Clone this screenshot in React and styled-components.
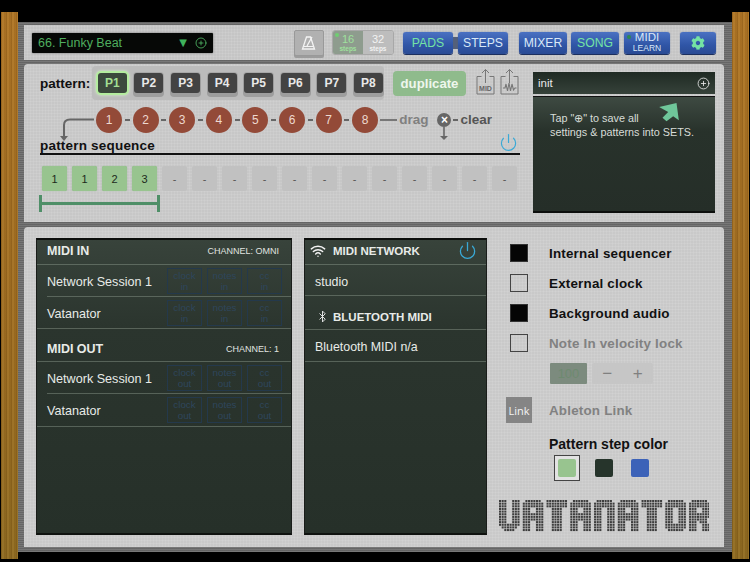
import React from "react"
import styled, { createGlobalStyle } from "styled-components"
import { Bluetooth, CirclePlus, Power, Wifi } from "lucide-react"
import { FaCog } from "react-icons/fa"

const GlobalStyle = createGlobalStyle`
    html, body { margin: 0; padding: 0; background: #000; }
    * { box-sizing: border-box; }
    body { font-family: "Liberation Sans", Arial, sans-serif; }
`;

const linen = `
    repeating-linear-gradient(0deg, rgba(255,255,255,.05) 0 1px, rgba(0,0,0,.012) 1px 3px),
    repeating-linear-gradient(90deg, rgba(255,255,255,.05) 0 1px, rgba(0,0,0,.012) 1px 3px)`;

const LOGO = {
    V: ["###..###","###..###","###..###","###..###","###..###","###..###","###..###","###..###","###..###","########",".######.","..####.."],
    A: [".######.","########","########","###..###","###..###","########","########","########","###..###","###..###","###..###","###..###"],
    T: ["########","########","########","..####..","..####..","..####..","..####..","..####..","..####..","..####..","..####..","..####.."],
    N: [".######.","########","########","###..###","###..###","###..###","###..###","###..###","###..###","###..###","###..###","###..###"],
    O: [".######.","########","########","###..###","###..###","###..###","###..###","###..###","###..###","########","########",".######."],
    R: [".######.","########","########","###..###","###..###","########","########","#######.","###.###.","###..###","###..###","###..###"],
};

function Logo(){
    const pitch = 2.64;
    const dots = [];
    "VATANATOR".split("").forEach((letter, l) => {
        LOGO[letter].forEach((row, y) => {
            row.split("").forEach((cell, x) => {
                if(cell === "#"){
                    dots.push(<rect key={`${l}-${x}-${y}`} x={(l * 9 + x) * pitch} y={y * pitch} width="2.05" height="2.05" fill="#3d3d3d" />);
                }
            });
        });
    });
    return (
        <LogoSvg viewBox="0 0 210 32" role="img" aria-label="VATANATOR">
            {dots}
        </LogoSvg>
    );
}

function Metronome(){
    return (
        <svg width="16" height="16" viewBox="0 0 16 16" fill="none" stroke="#f4f4f4" strokeWidth="1.3">
            <path d="M5.5 2 H9.5 L13.5 14 H1.5 Z" />
            <path d="M3 11.5 H12" strokeWidth="1" />
            <path d="M6 11 L11 2" />
        </svg>
    );
}

function ShareIcon({ label, wave }){
    return (
        <svg width="19" height="27" viewBox="0 0 19 27" fill="none" stroke="#777" strokeWidth="1">
            <path d="M5.5 8.5 H1 V26 H18 V8.5 H13.5" />
            <path d="M9.5 15 V1.5 M6 5 L9.5 1.5 L13 5" />
            {wave && <path d="M3 20 L5 20 L6 16 L7.5 23 L9 15 L10.5 23 L12 16 L13.5 22 L15 20 L16.5 20" strokeWidth="1.1" />}
            {label && <text x="9.5" y="22.5" textAnchor="middle" fontSize="7" fontWeight="700" fill="#666" stroke="none" fontFamily="Liberation Sans">{label}</text>}
        </svg>
    );
}

function MiniButtons({ dir }){
    return (
        <>
            {["clock", "notes", "cc"].map(name => <Mini key={name}>{name}<br />{dir}</Mini>)}
        </>
    );
}

function App(){
    const patterns = [1, 2, 3, 4, 5, 6, 7, 8];
    const sequence = ["1", "1", "2", "3", "-", "-", "-", "-", "-", "-", "-", "-", "-", "-", "-", "-"];

    return (
        <Page>
            <GlobalStyle />
            <Wood $side="left" />
            <Chassis>
                <TopBar>
                    <SongSelect>
                        <SongName>66. Funky Beat</SongName>
                        <Triangle>▼</Triangle>
                        <CirclePlus size={12} color="#53c06a" strokeWidth={1.6} />
                    </SongSelect>
                    <MetroButton><Metronome /></MetroButton>
                    <StepsToggle>
                        <StepsOption $on><Led />16<small>steps</small></StepsOption>
                        <StepsOption>32<small>steps</small></StepsOption>
                    </StepsToggle>
                    <Joined>
                        <BlueButton $w={50} $on>PADS</BlueButton>
                        <Joiner />
                        <BlueButton $w={50}>STEPS</BlueButton>
                    </Joined>
                    <BlueButton $w={48} $ml={11}>MIXER</BlueButton>
                    <BlueButton $w={48} $ml={4} $on>SONG</BlueButton>
                    <MidiLearn><LearnLed />MIDI<small>LEARN</small></MidiLearn>
                    <BlueButton $w={36} $ml={10} $on><FaCog size={14} /></BlueButton>
                </TopBar>

                <PatternPanel>
                    <PatternLeft>
                        <PatternRow>
                            <PatternLabel>pattern:</PatternLabel>
                            <Tray>
                                {patterns.map(n => (
                                    <Key key={n}><KeyCap $on={n === 1}>P{n}</KeyCap></Key>
                                ))}
                            </Tray>
                            <Duplicate>duplicate</Duplicate>
                            <ShareIcons>
                                <ShareIcon label="MID" />
                                <ShareIcon wave />
                            </ShareIcons>
                        </PatternRow>

                        <ChainRow>
                            <Elbow width="56" height="27" viewBox="0 0 56 27" fill="none" stroke="#666" strokeWidth="2">
                                <path d="M54 13.5 H30 Q24 13.5 24 19 V31" />
                                <path d="M20 30 H28 L24 35 Z" fill="#666" stroke="none" />
                            </Elbow>
                            {patterns.map(n => (
                                <React.Fragment key={n}>
                                    <Chain>{n}</Chain>
                                    {n < 8 && <Dash />}
                                </React.Fragment>
                            ))}
                            <DragLine />
                            <HintText>drag</HintText>
                            <ClearWrap>
                                <ClearDot>×</ClearDot>
                                <ClearArrow width="10" height="14" viewBox="0 0 10 14">
                                    <path d="M5 0 V9" stroke="#666" strokeWidth="1.6" />
                                    <path d="M1 9 H9 L5 13 Z" fill="#666" />
                                </ClearArrow>
                            </ClearWrap>
                            <ShortDash />
                            <HintText $dark>clear</HintText>
                        </ChainRow>

                        <SequenceHead>
                            pattern sequence
                            <Power size={19} color="#3aa9d6" strokeWidth={1.5} />
                        </SequenceHead>

                        <Cells>
                            {sequence.map((v, i) => <Cell key={i} $on={v !== "-"}>{v}</Cell>)}
                        </Cells>
                        <Bracket />
                    </PatternLeft>

                    <SetsColumn>
                        <SetsBar>
                            init
                            <CirclePlus size={13} color="#eee" strokeWidth={1.5} />
                        </SetsBar>
                        <SetsBody>
                            <SetsArrow viewBox="418 125 62 60">
                                <polygon points="418,140 470,128 477,180 460,168 440,183 428,172 445,155" fill="#6fc69a" />
                            </SetsArrow>
                            Tap "⊕" to save all<br />
                            settings &amp; patterns into SETS.
                        </SetsBody>
                    </SetsColumn>
                </PatternPanel>

                <MidiPanel>
                    <MidiList $w={256}>
                        <Head $h={25} $pb={3}>
                            <HeadTitle>MIDI IN</HeadTitle>
                            <Channel>CHANNEL: OMNI</Channel>
                        </Head>
                        <Row $inset><Name>Network Session 1</Name><MiniButtons dir="in" /></Row>
                        <Row><Name>Vatanator</Name><MiniButtons dir="in" /></Row>
                        <Head $h={33} $pt={8}>
                            <HeadTitle>MIDI OUT</HeadTitle>
                            <Channel>CHANNEL: 1</Channel>
                        </Head>
                        <Row $inset><Name>Network Session 1</Name><MiniButtons dir="out" /></Row>
                        <Row $h={33}><Name>Vatanator</Name><MiniButtons dir="out" /></Row>
                    </MidiList>

                    <MidiList $w={183}>
                        <Head $h={25} $pb={3} $net>
                            <HeadIcon><Wifi size={16} color="#f2f2f2" strokeWidth={2.2} /></HeadIcon>
                            <HeadTitle $net>MIDI NETWORK</HeadTitle>
                            <HeadPower><Power size={19} color="#3aa9d6" strokeWidth={1.6} /></HeadPower>
                        </Head>
                        <NetRow $h={31}>studio</NetRow>
                        <Head $h={34} $pt={8} $net>
                            <HeadIcon $bt><Bluetooth size={13} color="#eee" strokeWidth={1.7} /></HeadIcon>
                            <HeadTitle $net>BLUETOOTH MIDI</HeadTitle>
                        </Head>
                        <NetRow $h={32}>Bluetooth MIDI n/a</NetRow>
                    </MidiList>

                    <Options>
                        <CheckRow><CheckBox $on /><CheckLabel>Internal sequencer</CheckLabel></CheckRow>
                        <CheckRow><CheckBox /><CheckLabel>External clock</CheckLabel></CheckRow>
                        <CheckRow><CheckBox $on /><CheckLabel>Background audio</CheckLabel></CheckRow>
                        <CheckRow><CheckBox /><CheckLabel $off>Note In velocity lock</CheckLabel></CheckRow>
                        <Stepper>
                            <StepValue>100</StepValue>
                            <StepTray><span>−</span><span>+</span></StepTray>
                        </Stepper>
                        <LinkRow>
                            <LinkBadge>Link</LinkBadge>
                            <CheckLabel $off>Ableton Link</CheckLabel>
                        </LinkRow>
                        <ColorTitle>Pattern step color</ColorTitle>
                        <Swatches>
                            <SwatchCell $on><Swatch $c="#98c48f" /></SwatchCell>
                            <SwatchCell><Swatch $c="#26342b" /></SwatchCell>
                            <SwatchCell><Swatch $c="#3c62b8" /></SwatchCell>
                        </Swatches>
                        <Logo />
                    </Options>
                </MidiPanel>
            </Chassis>
            <Wood $side="right" />
        </Page>
    );
}

const Page = styled.div`
    display: flex;
    align-items: flex-start;
    width: 750px;
    height: 562px;
    padding: 0 1px;
    background: #000;
    overflow: hidden;`;

const Wood = styled.div`
    flex: 0 0 17px;
    height: 547px;
    margin-top: 12px;
    background:
        repeating-linear-gradient(90deg, rgba(80,45,0,.18) 0 1px, rgba(255,210,120,.07) 1px 3px, rgba(80,45,0,.06) 3px 5px),
        linear-gradient(#ad7426, #9c6c22 60%, #8d6a22);`;

const Chassis = styled.div`
    flex: 1;
    display: flex;
    flex-direction: column;
    gap: 4px;
    height: 530px;
    margin-top: 22px;
    padding: 3px 8px 4px 6px;
    background:
        repeating-linear-gradient(0deg, rgba(255,255,255,.07) 0 1px, rgba(0,0,0,.07) 1px 2px),
        #6d6d6d;`;

const TopBar = styled.div`
    display: flex;
    align-items: center;
    height: 35px;
    padding-left: 8px;
    background: ${linen}, #c9c9c9;`;

const SongSelect = styled.div`
    display: flex;
    align-items: center;
    width: 181px;
    height: 20px;
    padding: 0 6px;
    background: #060806;
    border-radius: 1px;
    box-shadow: 0 0 2px #555;`;

const SongName = styled.span`
    flex: 1;
    font-size: 12.5px;
    color: #4fae5f;`;

const Triangle = styled.span`
    margin-right: 8px;
    font-size: 10px;
    color: #3fb25c;
    font-family: "DejaVu Sans", sans-serif;`;

const MetroButton = styled.div`
    display: flex;
    align-items: center;
    justify-content: center;
    width: 30px;
    height: 26px;
    margin-left: 81px;
    background: #b1b1b1;
    border: 1px solid #999;
    border-radius: 2px;
    box-shadow: 0 2px 0 #9c9c9c;`;

const StepsToggle = styled.div`
    display: flex;
    height: 25px;
    margin-left: 8px;
    border: 1px solid #a8a8a8;
    border-radius: 3px;
    overflow: hidden;`;

const StepsOption = styled.div`
    position: relative;
    display: flex;
    flex-direction: column;
    align-items: center;
    width: 30px;
    padding-top: 3px;
    font-size: 11px;
    line-height: 11px;
    background: ${p => p.$on ? "#8e9c8e" : "#bdbdbd"};
    color: ${p => p.$on ? "#9fe09d" : "#f2f2f2"};
    small { font-size: 6.5px; line-height: 8px; font-weight: 700; }`;

const Led = styled.i`
    position: absolute;
    top: 2px;
    left: 2px;
    width: 4px;
    height: 4px;
    border-radius: 50%;
    background: #6fce72;`;

const Joined = styled.div`
    display: flex;
    align-items: center;
    margin-left: 9px;`;

const Joiner = styled.div`
    width: 5px;
    height: 12px;
    background: #54607a;`;

const BlueButton = styled.div`
    display: flex;
    align-items: center;
    justify-content: center;
    width: ${p => p.$w}px;
    height: 22px;
    margin-left: ${p => p.$ml || 0}px;
    font-size: 12.2px;
    color: ${p => p.$on ? "#74e3a4" : "#d9e8f7"};
    background: linear-gradient(#4a71c2, #2f55a6 60%, #2a4b94);
    border-radius: 3px;
    box-shadow: 0 1px 0 #1c2f5e, 0 0 1px #3b5aa0;`;

const MidiLearn = styled(BlueButton)`
    position: relative;
    flex-direction: column;
    width: 46px;
    margin-left: 5px;
    font-size: 11.5px;
    line-height: 11px;
    small { font-size: 8.5px; line-height: 10px; }`;

const LearnLed = styled.i`
    position: absolute;
    top: 3px;
    left: 3px;
    width: 4px;
    height: 4px;
    border-radius: 50%;
    background: #2e8a4e;`;

const PatternPanel = styled.div`
    display: flex;
    height: 158px;
    padding: 2px 9px 0 16px;
    background: ${linen}, #cbcbcb;
    border-radius: 4px 4px 0 0;`;

const PatternLeft = styled.div`
    width: 480px;
    margin-right: 13px;`;

const PatternRow = styled.div`
    display: flex;
    align-items: center;
    height: 34px;`;

const PatternLabel = styled.div`
    width: 52px;
    font-size: 13.5px;
    font-weight: 700;
    color: #111;`;

const Tray = styled.div`
    display: flex;
    width: 292px;
    height: 34px;
    padding: 7px 0 0 2px;
    background: #bcbcbc;
    border-radius: 4px;`;

const Key = styled.div`
    flex: 0 0 36.6px;
    display: flex;
    justify-content: center;`;

const KeyCap = styled.div`
    display: flex;
    align-items: center;
    justify-content: center;
    width: 29px;
    height: 20px;
    font-size: 12px;
    font-weight: 700;
    color: ${p => p.$on ? "#a3df93" : "#e8e8e8"};
    background: ${p => p.$on ? "#3c493d" : "#434343"};
    border-radius: 3px;
    box-shadow: ${p => p.$on
        ? "0 0 0 2px #b4ec9f, 0 0 3px 2px #d8f5c8"
        : "0 3px 0 1px #9d9d9d, 0 0 0 1px #a8a8a8"};`;

const Duplicate = styled.div`
    display: flex;
    align-items: center;
    justify-content: center;
    width: 73px;
    height: 25px;
    margin-left: 9px;
    font-size: 13.2px;
    font-weight: 700;
    color: #eef6ec;
    background: #8fbb8c;
    border-radius: 4px;`;

const ShareIcons = styled.div`
    display: flex;
    gap: 5px;
    margin: 0 0 4px 10px;`;

const ChainRow = styled.div`
    display: flex;
    align-items: center;
    height: 27px;
    margin-top: 6px;`;

const Elbow = styled.svg`
    flex: 0 0 56px;
    overflow: visible;`;

const Chain = styled.div`
    flex: 0 0 26px;
    display: flex;
    align-items: center;
    justify-content: center;
    height: 26px;
    font-size: 12px;
    color: #eed9d0;
    background: #934a38;
    border-radius: 50%;`;

const Dash = styled.div`
    flex: 0 0 5px;
    height: 2px;
    margin: 0 2.8px;
    background: #666;`;

const DragLine = styled.div`
    flex: 0 0 17px;
    height: 2px;
    margin-left: 2px;
    background: #777;`;

const HintText = styled.span`
    margin-left: 2px;
    font-size: 13.5px;
    font-weight: 700;
    color: ${p => p.$dark ? "#555" : "#808080"};`;

const ClearWrap = styled.div`
    position: relative;
    margin-left: 9px;`;

const ClearDot = styled.div`
    display: flex;
    align-items: center;
    justify-content: center;
    width: 14px;
    height: 14px;
    font-size: 12px;
    font-weight: 700;
    line-height: 1;
    color: #fff;
    background: #666;
    border-radius: 50%;`;

const ClearArrow = styled.svg`
    position: absolute;
    top: 14px;
    left: 2px;`;

const ShortDash = styled.div`
    flex: 0 0 5px;
    height: 2px;
    margin-left: 2px;
    background: #666;`;

const SequenceHead = styled.div`
    display: flex;
    align-items: center;
    justify-content: space-between;
    height: 18px;
    margin-top: 4px;
    padding-right: 2px;
    font-size: 13.5px;
    font-weight: 700;
    color: #111;
    letter-spacing: .2px;
    border-bottom: 2px solid #111;
    svg { margin-top: -6px; }`;

const Cells = styled.div`
    display: flex;
    gap: 5px;
    margin-top: 11px;
    padding-left: 2px;`;

const Cell = styled.div`
    display: flex;
    align-items: center;
    justify-content: center;
    width: 25px;
    height: 25px;
    font-size: 11px;
    color: ${p => p.$on ? "#1c2a1c" : "#555"};
    background: ${p => p.$on ? "#98c48f" : "#c1c1c1"};
    border-radius: 2px;
    box-shadow: ${p => p.$on ? "0 0 1px #7fa878" : "none"};`;

const Bracket = styled.div`
    width: 121px;
    height: 17px;
    margin: 4px 0 0 -1px;
    border-left: 3px solid #4f8f68;
    border-right: 3px solid #4f8f68;
    background: linear-gradient(#4f8f68, #4f8f68) 0 7px / 100% 3px no-repeat;`;

const SetsColumn = styled.div`
    width: 182px;
    padding-top: 6px;`;

const SetsBar = styled.div`
    display: flex;
    align-items: center;
    justify-content: space-between;
    height: 22px;
    padding: 0 5px;
    font-size: 11.5px;
    color: #e8e8e8;
    background: linear-gradient(#1f2a23, #36423a);`;

const SetsBody = styled.div`
    position: relative;
    height: 117px;
    margin-top: 2px;
    padding: 14px 0 0 17px;
    font-size: 10.8px;
    line-height: 14px;
    color: #d8ddd8;
    background: linear-gradient(#3e4a42, #28322b 30%, #252e28);
    border-top: 1px solid #111;
    border-bottom: 2px solid #0d0f0d;`;

const SetsArrow = styled.svg`
    position: absolute;
    top: 5px;
    left: 126px;
    width: 21px;
    height: 20px;`;

const MidiPanel = styled.div`
    display: flex;
    height: 320px;
    margin-top: 1px;
    padding: 11px 12px 12px;
    background: ${linen}, #cdcdcd;
    border-radius: 4px 4px 0 0;`;

const MidiList = styled.div`
    flex: 0 0 ${p => p.$w}px;
    margin-right: 12px;
    color: #e8ebe8;
    background: linear-gradient(#38433b, #2b352e 30%, #263029);
    border: 1px solid #1a1d1a;
    border-top: 2px solid #0c0e0c;
    border-bottom: 2px solid #0f120f;`;

const Head = styled.div`
    display: flex;
    align-items: center;
    height: ${p => p.$h}px;
    padding: ${p => p.$pt || 0}px ${p => p.$net ? 4 : 12}px ${p => p.$pb || 0}px ${p => p.$net ? 5 : 10}px;
    border-bottom: 1.5px solid rgba(150,165,150,.42);`;

const HeadTitle = styled.span`
    flex: 1;
    font-size: ${p => p.$net ? 11.5 : 12.5}px;
    font-weight: 700;`;

const HeadIcon = styled.span`
    display: flex;
    flex: 0 0 23px;
    padding-left: ${p => p.$bt ? 6 : 0}px;`;

const HeadPower = styled.span`
    display: flex;
    margin-right: 5px;`;

const Channel = styled.span`
    font-size: 9px;
    color: #e0e4e0;`;

const Row = styled.div`
    display: flex;
    align-items: center;
    gap: 5px;
    height: ${p => p.$h || 32}px;
    margin-left: ${p => p.$inset ? 10 : 0}px;
    padding: 0 9px 0 ${p => p.$inset ? 0 : 10}px;
    border-bottom: 1.5px solid rgba(150,165,150,.42);`;

const Name = styled.span`
    flex: 1;
    padding-top: 2px;
    font-size: 12.6px;`;

const Mini = styled.div`
    flex: 0 0 35px;
    height: 26px;
    padding-top: 1px;
    font-size: 9.8px;
    line-height: 11px;
    text-align: center;
    color: #2e465c;
    border: 1px solid #24394c;`;

const NetRow = styled.div`
    display: flex;
    align-items: center;
    height: ${p => p.$h}px;
    padding: 3px 0 0 10px;
    font-size: 12.4px;
    border-bottom: 1.5px solid rgba(150,165,150,.42);`;

const Options = styled.div`
    flex: 1;
    margin-left: 7px;`;

const CheckRow = styled.div`
    display: flex;
    align-items: center;
    height: 30px;
    padding-left: 4px;`;

const CheckBox = styled.div`
    flex: 0 0 18px;
    height: 18px;
    margin-right: 21px;
    background: ${p => p.$on ? "#050505" : "transparent"};
    border: 1px solid ${p => p.$on ? "#333" : "#444"};`;

const CheckLabel = styled.span`
    font-size: 13.4px;
    font-weight: 700;
    letter-spacing: .2px;
    color: ${p => p.$off ? "#818181" : "#111"};`;

const Stepper = styled.div`
    display: flex;
    gap: 5px;
    height: 21px;
    margin: 5px 0 0 44px;`;

const StepValue = styled.div`
    display: flex;
    align-items: center;
    justify-content: center;
    width: 37px;
    font-size: 13px;
    color: #6e8a70;
    background: #7c8b7e;
    border-radius: 1px;`;

const StepTray = styled.div`
    display: flex;
    align-items: center;
    justify-content: space-around;
    width: 61px;
    font-size: 17px;
    color: #808080;
    background: #c6c6c6;
    border-radius: 2px;`;

const LinkRow = styled.div`
    display: flex;
    align-items: center;
    height: 26px;
    margin-top: 13px;`;

const LinkBadge = styled.div`
    display: flex;
    align-items: center;
    justify-content: center;
    width: 26px;
    height: 26px;
    margin-right: 17px;
    font-family: "Open Sans", sans-serif;
    font-size: 11px;
    color: #f4f4f4;
    background: #858585;`;

const ColorTitle = styled.div`
    height: 14px;
    margin: 14px 0 0 43px;
    font-size: 14px;
    line-height: 14px;
    font-weight: 700;
    color: #111;`;

const Swatches = styled.div`
    display: flex;
    gap: 10.5px;
    margin: 4px 0 19px 48px;`;

const SwatchCell = styled.div`
    display: flex;
    align-items: center;
    justify-content: center;
    width: 26px;
    height: 26px;
    border: ${p => p.$on ? "1px solid #444" : "none"};
    background: ${p => p.$on ? "#e2e2e2" : "transparent"};`;

const Swatch = styled.div`
    width: 18px;
    height: 18px;
    background: ${p => p.$c};
    border-radius: 2px;`;

const LogoSvg = styled.svg`
    display: block;
    width: 210px;
    height: 32px;
    margin-left: -7px;`;

export default App;
